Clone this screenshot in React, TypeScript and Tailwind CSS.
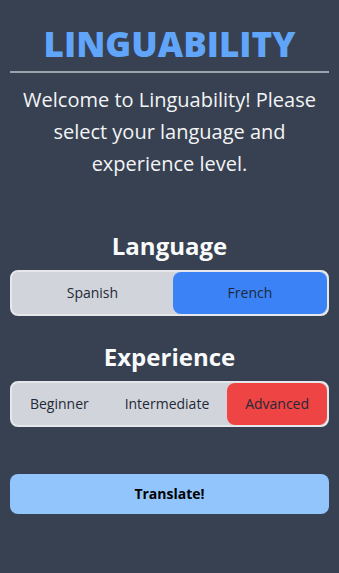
import React, { useState } from "react";

export default function App() {
  const [lang, setLang] = useState("French");
  const [level, setLevel] = useState("Advanced");
  return (
    <div
      className="min-h-screen bg-[#374151] px-[10px] pt-[22px] text-center"
      style={{ fontFamily: '"Open Sans", "Noto Sans", sans-serif' }}
    >
      <h1 className="text-[35px] font-extrabold leading-[44px] text-[#60a5fa]">LINGUABILITY</h1>
      <div className="mt-[5px] h-[2px] bg-[#9ca3af]" />
      <p className="mt-[11px] text-[20px] leading-[32px] text-[#f3f4f6]">
        Welcome to Linguability! Please select your language and experience level.
      </p>
      <h2 className="mt-[50px] text-[24px] font-bold leading-[32px] text-[#f9fafb]">Language</h2>
      <div className="mt-[8px] flex rounded-lg border-2 border-[#e5e7eb] bg-[#d1d5db]">
        {["Spanish", "French"].map((l) => (
          <button
            key={l}
            onClick={() => setLang(l)}
            className={`grow rounded-lg py-[11px] text-[14px] leading-[20px] text-[#1f2937] ${
              lang === l ? "bg-[#3b82f6]" : ""
            }`}
          >
            {l}
          </button>
        ))}
      </div>
      <h2 className="mt-[25px] text-[24px] font-bold leading-[32px] text-[#f9fafb]">Experience</h2>
      <div className="mt-[8px] flex rounded-lg border-2 border-[#e5e7eb] bg-[#d1d5db]">
        {["Beginner", "Intermediate", "Advanced"].map((l) => (
          <button
            key={l}
            onClick={() => setLevel(l)}
            className={`grow rounded-lg py-[11px] text-[14px] leading-[20px] text-[#1f2937] ${
              level === l ? "bg-[#ef4444]" : ""
            }`}
          >
            {l}
          </button>
        ))}
      </div>
      <button className="mt-[47px] w-full rounded-lg bg-[#93c5fd] py-[10px] text-[14px] font-bold leading-[20px] text-black">
        Translate!
      </button>
    </div>
  );
}
